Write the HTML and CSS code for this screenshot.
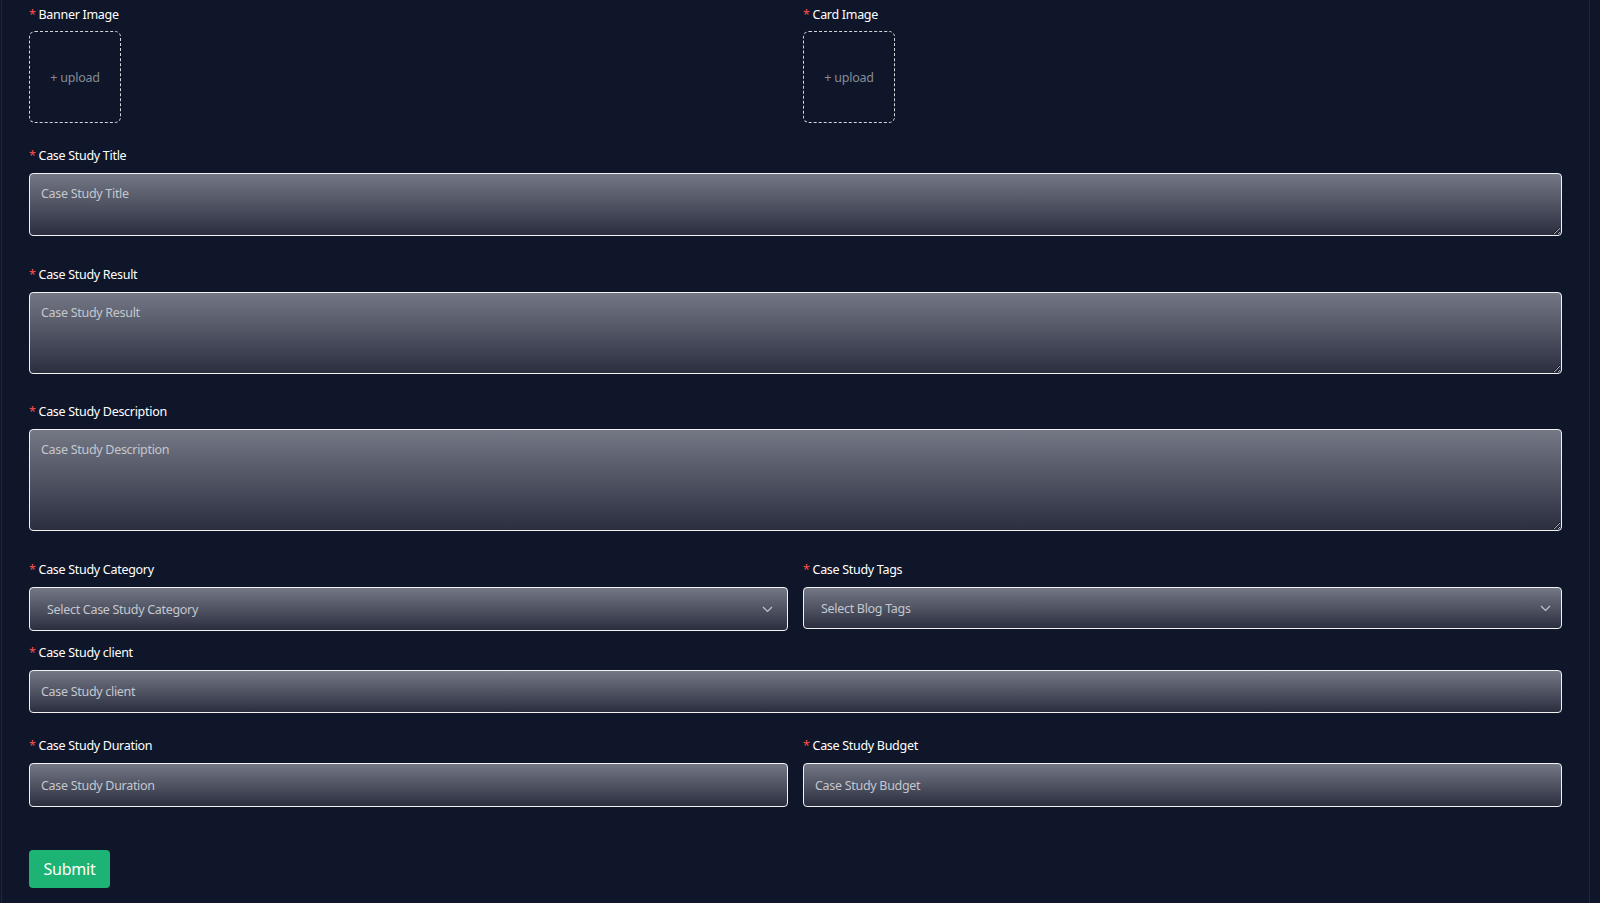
FILE: index.html
```html
<!DOCTYPE html>
<html lang="en">
<head>
  <meta charset="UTF-8" />
  <meta name="viewport" content="width=device-width, initial-scale=1.0" />
  <title>Add Case Study</title>
  <link rel="stylesheet" href="styles.css">
</head>
<body>
  <div class="page">
    <form class="case-form" onsubmit="return false;">
      <div class="row two-col field upload-row">
        <div>
          <label class="label"><span class="req">*</span> Banner Image</label>
          <div class="upload-box">+ upload</div>
        </div>
        <div>
          <label class="label"><span class="req">*</span> Card Image</label>
          <div class="upload-box">+ upload</div>
        </div>
      </div>

      <div class="field field-title">
        <label class="label"><span class="req">*</span> Case Study Title</label>
        <textarea class="control area area-sm" placeholder="Case Study Title"></textarea>
      </div>

      <div class="field">
        <label class="label"><span class="req">*</span> Case Study Result</label>
        <textarea class="control area area-md" placeholder="Case Study Result"></textarea>
      </div>

      <div class="field field-desc">
        <label class="label"><span class="req">*</span> Case Study Description</label>
        <textarea class="control area area-lg" placeholder="Case Study Description"></textarea>
      </div>

      <div class="row two-col field field-tight">
        <div>
          <label class="label"><span class="req">*</span> Case Study Category</label>
          <div class="control select select-cat">
            <span class="select-text">Select Case Study Category</span>
            <svg class="chevron" width="11" height="7" viewBox="0 0 11 7"><path d="M1 1l4.5 4.5L10 1" fill="none" stroke="#c3c6cf" stroke-width="1.2"/></svg>
          </div>
        </div>
        <div>
          <label class="label"><span class="req">*</span> Case Study Tags</label>
          <div class="control select select-tags">
            <span class="select-text">Select Blog Tags</span>
            <svg class="chevron" width="11" height="7" viewBox="0 0 11 7"><path d="M1 1l4.5 4.5L10 1" fill="none" stroke="#c3c6cf" stroke-width="1.2"/></svg>
          </div>
        </div>
      </div>

      <div class="field field-client">
        <label class="label"><span class="req">*</span> Case Study client</label>
        <input class="control input input-client" type="text" placeholder="Case Study client">
      </div>

      <div class="row two-col field field-last">
        <div>
          <label class="label"><span class="req">*</span> Case Study Duration</label>
          <input class="control input" type="text" placeholder="Case Study Duration">
        </div>
        <div>
          <label class="label"><span class="req">*</span> Case Study Budget</label>
          <input class="control input" type="text" placeholder="Case Study Budget">
        </div>
      </div>

      <button class="submit-btn" type="submit">Submit</button>
    </form>
  </div>
</body>
</html>
```

FILE: styles.css
```css
* {
  box-sizing: border-box;
}

html,
body {
  margin: 0;
  background: #0f1629;
  font-family: "Noto Sans", "Open Sans", sans-serif;
  color: #fff;
}

.page {
  margin-left: 1px;
  width: 1589px;
  min-height: 903px;
  border-left: 1px solid #1c2742;
  border-right: 1px solid #1c2742;
  padding: 5px 27px 0 27px;
  background: #0f1629;
}

.field {
  margin-bottom: 28px;
}

.upload-row {
  margin-bottom: 23px;
}

.field-title {
  margin-bottom: 29px;
}

.field-desc {
  margin-bottom: 29px;
}

.field-tight {
  margin-bottom: 12px;
}

.field-client {
  margin-bottom: 23px;
}

.field-last {
  margin-bottom: 43px;
}

.two-col {
  display: grid;
  grid-template-columns: 1fr 1fr;
  column-gap: 15px;
}

.label {
  display: block;
  font-size: 12.5px;
  line-height: 20px;
  margin-bottom: 7px;
  color: #fff;
  letter-spacing: -0.3px;
}

.req {
  color: #ff4d4f;
}

.upload-box {
  width: 92px;
  height: 92px;
  margin-top: -1px;
  border: 1px dashed #d5d7dc;
  border-radius: 6px;
  display: flex;
  align-items: center;
  justify-content: center;
  font-size: 12.5px;
  letter-spacing: -0.2px;
  color: #878b96;
}

.control {
  display: block;
  width: 100%;
  border: 1px solid #f2f2f2;
  border-radius: 4px;
  background: linear-gradient(to bottom, #747885, #2a2e3f);
  color: #fff;
  font-family: inherit;
  font-size: 12.5px;
  letter-spacing: -0.3px;
  outline: none;
}

.control::placeholder {
  color: #c4c7ce;
}

.area {
  padding: 10px 11px;
  line-height: 20px;
  resize: vertical;
}

.area-sm {
  height: 63px;
}

.area-md {
  height: 82px;
}

.area-lg {
  height: 102px;
}

.select {
  display: flex;
  align-items: center;
  justify-content: space-between;
  padding: 0 14px 0 17px;
}

.select-cat {
  height: 44px;
}

.select-tags {
  height: 42px;
  padding-right: 10px;
}

.select-text {
  color: #c4c7ce;
}

.input {
  height: 44px;
  padding: 0 11px;
}

.input-client {
  height: 43px;
}

.submit-btn {
  width: 81px;
  height: 38px;
  border: none;
  border-radius: 4px;
  background: #1cb374;
  color: #fff;
  font-family: inherit;
  font-size: 16px;
  letter-spacing: -0.2px;
  cursor: pointer;
}
```
